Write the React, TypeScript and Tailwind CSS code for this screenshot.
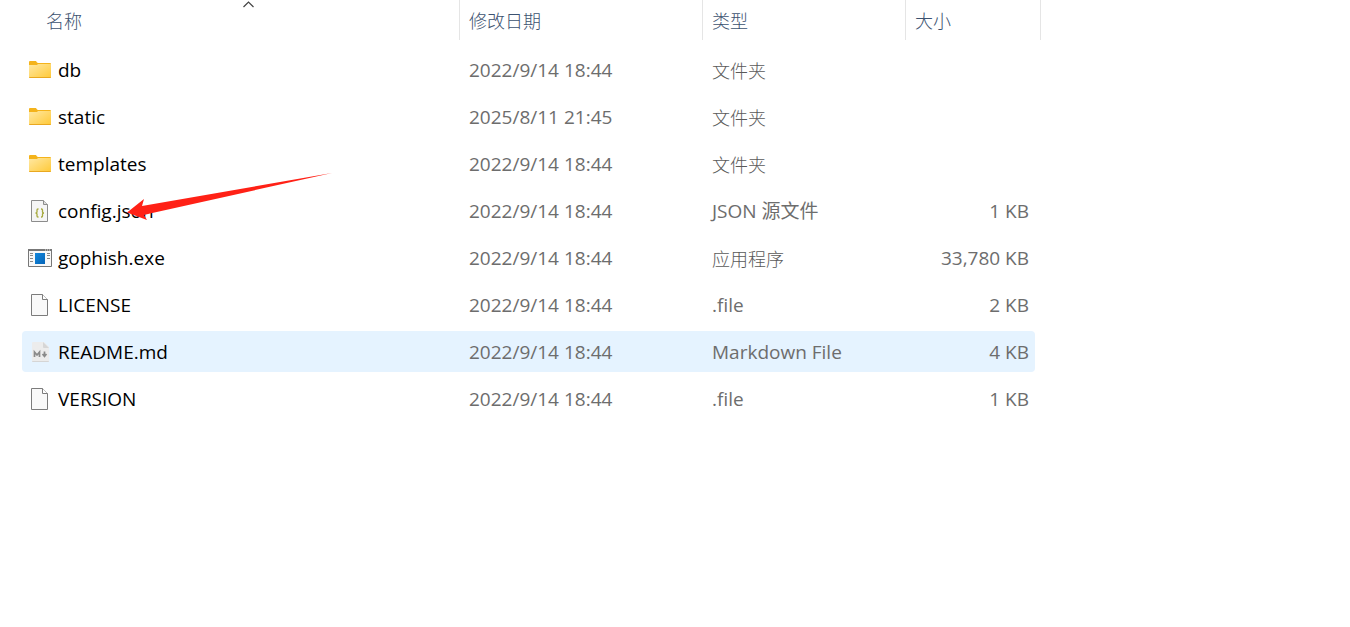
import { useState } from 'react'
import clsx from 'clsx'

type Kind = 'folder' | 'json' | 'exe' | 'file' | 'markdown'

type Entry = {
  name: string
  kind: Kind
  modified: string
  type: string
  size?: string
}

const ENTRIES: Entry[] = [
  { name: 'db',          kind: 'folder',   modified: '2022/9/14 18:44', type: '文件夹' },
  { name: 'static',      kind: 'folder',   modified: '2025/8/11 21:45', type: '文件夹' },
  { name: 'templates',   kind: 'folder',   modified: '2022/9/14 18:44', type: '文件夹' },
  { name: 'config.json', kind: 'json',     modified: '2022/9/14 18:44', type: 'JSON 源文件', size: '1 KB' },
  { name: 'gophish.exe', kind: 'exe',      modified: '2022/9/14 18:44', type: '应用程序', size: '33,780 KB' },
  { name: 'LICENSE',     kind: 'file',     modified: '2022/9/14 18:44', type: '.file', size: '2 KB' },
  { name: 'README.md',   kind: 'markdown', modified: '2022/9/14 18:44', type: 'Markdown File', size: '4 KB' },
  { name: 'VERSION',     kind: 'file',     modified: '2022/9/14 18:44', type: '.file', size: '1 KB' },
]

function FolderIcon() {
  return (
    <>
      <defs>
        <linearGradient id="folder" x1="0" y1="0" x2="1" y2="1">
          <stop offset="0" stopColor="#ffe8a3" />
          <stop offset="1" stopColor="#ffc937" />
        </linearGradient>
      </defs>
      <path d="M1 3a1 1 0 0 1 1-1h6l1 1.500 1 .5h12a1 1 0 0 1 1 1v2H1z" fill="#f4b31b" />
      <path d="M1 6h8l1-1h13v13a1 1 0 0 1-1 1H2a1 1 0 0 1-1-1z" fill="url(#folder)" />
      <path d="M1 18h22a1 1 0 0 1-1 1H2a1 1 0 0 1-1-1z" fill="#e9a820" />
    </>
  )
}

function PageIcon() {
  return (
    <>
      <path d="M3.500 .5h11l5 5v16h-16z" fill="#f9f9f9" stroke="#7c7c7c" />
      <path d="M14.500 .5v5h5" fill="#fff" stroke="#7c7c7c" />
    </>
  )
}

function JsonIcon() {
  return (
    <>
      <path d="M3.500 .5h12l4 4v17h-16z" fill="#f5f5f5" stroke="#8c8c8c" />
      <path d="M15.500 .5v4h4" fill="#ddd" stroke="#8c8c8c" />
      <path
        d="M10.500 9H10q-1 0-1 1v2q0 1-1.500 1 1.500 0 1.500 1v2q0 1 1 1h.5M13 9h.5q1 0 1 1v2q0 1 1.500 1-1.500 0-1.500 1v2q0 1-1 1H13"
        fill="none"
        stroke="#a5a83c"
        strokeWidth="1.300"
      />
    </>
  )
}

function ExeIcon() {
  return (
    <>
      <defs>
        <linearGradient id="app" x1="0" y1="0" x2="1" y2="1">
          <stop offset="0" stopColor="#1387dc" />
          <stop offset="1" stopColor="#0565b8" />
        </linearGradient>
      </defs>
      <path d="M.5 2.500h23v17H.5z" fill="#f8f8f8" stroke="#777" />
      <path d="M0 2h24v2H0z" fill="#777" />
      <path d="M17 2.500h1v1h-1zM19 2.500h1v1h-1zM21 2.500h1v1h-1z" fill="#e4e4e4" />
      <path d="M2 6.500h3M2 8.500h3M2 11.500h3M2 14.500h3M19 6.500h3M19 8.500h3M19 11.500h3" stroke="#888" />
      <path d="M7 6h10v11H7z" fill="url(#app)" />
    </>
  )
}

function MarkdownIcon() {
  return (
    <>
      <path d="M5 1h11l5 5v14a1 1 0 0 1-1 1H5a1 1 0 0 1-1-1V2a1 1 0 0 1 1-1z" fill="#ececec" />
      <path d="M4 20h17a1 1 0 0 1-1 1H5a1 1 0 0 1-1-1z" fill="#d5d5d5" />
      <path d="M15 1l6 6h-5a1 1 0 0 1-1-1z" fill="#d6d6d6" />
      <path d="M6.500 16v-5l2.500 3 2.500-3v5M16.500 10.500v5M14.500 13l2 2.500 2-2.500" fill="none" stroke="#8a8a8a" strokeWidth="1.700" />
    </>
  )
}

const ICONS = {
  folder: FolderIcon,
  json: JsonIcon,
  exe: ExeIcon,
  file: PageIcon,
  markdown: MarkdownIcon,
}

function FileIcon({ kind }: { kind: Kind }) {
  const Icon = ICONS[kind]
  return (
    <svg viewBox="0 0 24 24" className="size-6 shrink-0" aria-hidden="true">
      <Icon />
    </svg>
  )
}

function HeaderCell({ label, sorted = false }: { label: string; sorted?: boolean }) {
  return (
    <th scope="col" aria-sort={sorted ? 'ascending' : undefined} className="p-0 pb-1.5 font-normal">
      <button
        className={clsx(
          'relative flex h-10 w-full items-center border-r border-[#e5e5e5] pt-0.5 text-lg font-light text-[#3c5270]',
          sorted ? 'pl-[46px]' : 'pl-[9px]',
        )}
      >
        {label}
        {sorted && (
          <svg viewBox="0 0 12 8" className="absolute top-0 left-[243px] h-2 w-3" aria-hidden="true">
            <path d="M.5 7 5.500 2l5 5" fill="none" stroke="#444" strokeWidth="1.200" />
          </svg>
        )}
      </button>
    </th>
  )
}

function FileRow({ entry, selected, onSelect }: { entry: Entry; selected: boolean; onSelect: () => void }) {
  const cell = clsx('flex h-[41px] items-center pt-0.5 whitespace-pre', selected && 'bg-[#e5f3ff]')
  const latin = /[a-z]/i.test(entry.type)

  return (
    <tr aria-selected={selected} onClick={onSelect} className="text-[19px] text-[#6d6d6d]">
      <td className="py-[3px] pr-0 pl-[22px]">
        <div className={clsx(cell, 'gap-1.5 rounded-l-sm pl-1.5 text-black')}>
          <FileIcon kind={entry.kind} />
          {entry.name}
        </div>
      </td>
      <td className="px-0 py-[3px]">
        <div className={clsx(cell, 'pl-[9px]')}>{entry.modified}</div>
      </td>
      <td className="px-0 py-[3px]">
        <div className={clsx(cell, 'pl-[9px]', !latin && 'text-lg font-light text-[#5a5a5a]')}>{entry.type}</div>
      </td>
      <td className="py-[3px] pr-1.5 pl-0">
        <div className={clsx(cell, 'justify-end rounded-r-sm pr-1.5')}>{entry.size}</div>
      </td>
    </tr>
  )
}

// Red pointer drawn over the config.json row
function Pointer() {
  return (
    <svg
      viewBox="0 0 206 50"
      className="pointer-events-none absolute top-[172px] left-[127px] h-[50px] w-[206px]"
      aria-hidden="true"
    >
      <path d="M0 40.500 17 27l-2 7L205 1 23 41.500l-6 1.500 3 5z" fill="#ff2116" />
    </svg>
  )
}

export default function App() {
  const [selected, setSelected] = useState('README.md')

  return (
    <main className="relative min-h-screen overflow-x-auto bg-white font-['Open_Sans','Noto_Sans_CJK_SC',sans-serif]">
      <table className="border-separate border-spacing-0 text-left">
        <colgroup>
          <col className="w-[460px]" />
          <col className="w-[243px]" />
          <col className="w-[203px]" />
          <col className="w-[135px]" />
        </colgroup>
        <thead>
          <tr>
            <HeaderCell label="名称" sorted />
            <HeaderCell label="修改日期" />
            <HeaderCell label="类型" />
            <HeaderCell label="大小" />
          </tr>
        </thead>
        <tbody>
          {ENTRIES.map(e => (
            <FileRow
              key={e.name}
              entry={e}
              selected={e.name === selected}
              onSelect={() => setSelected(e.name)}
            />
          ))}
        </tbody>
      </table>
      <Pointer />
    </main>
  )
}
